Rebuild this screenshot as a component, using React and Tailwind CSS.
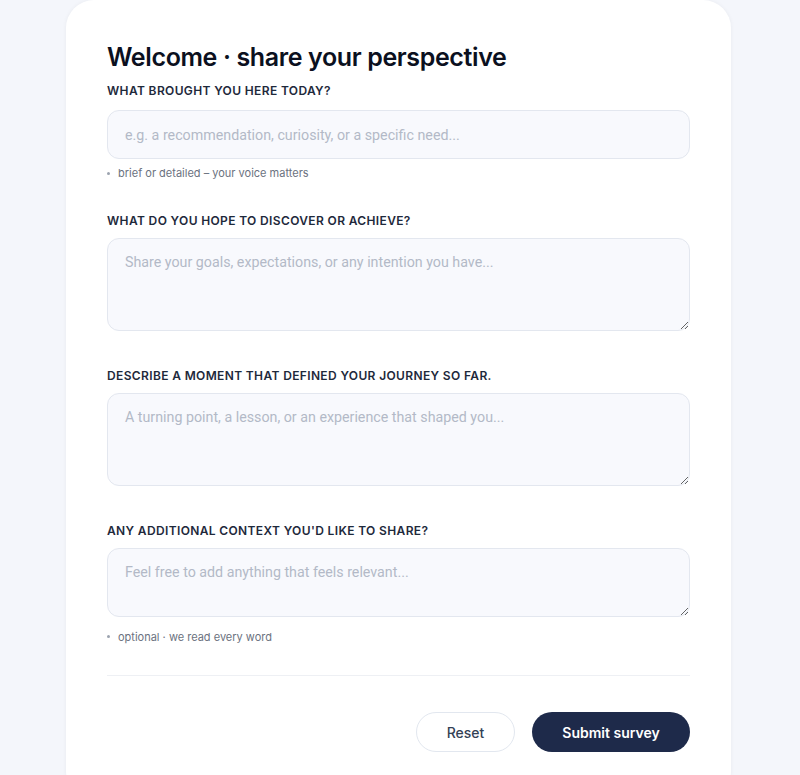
import { useState } from 'react'

const FIELDS = [
  {
    id: 'brought',
    label: 'What brought you here today?',
    placeholder: 'e.g. a recommendation, curiosity, or a specific need...',
    kind: 'input',
    hint: 'brief or detailed – your voice matters',
  },
  {
    id: 'hope',
    label: 'What do you hope to discover or achieve?',
    placeholder: 'Share your goals, expectations, or any intention you have...',
    kind: 'textarea',
    rows: 'h-[93px]',
  },
  {
    id: 'moment',
    label: 'Describe a moment that defined your journey so far.',
    placeholder: 'A turning point, a lesson, or an experience that shaped you...',
    kind: 'textarea',
    rows: 'h-[93px]',
  },
  {
    id: 'context',
    label: "Any additional context you'd like to share?",
    placeholder: 'Feel free to add anything that feels relevant...',
    kind: 'textarea',
    rows: 'h-[69px]',
    hint: 'optional · we read every word',
  },
]

// placeholder text renders narrower than the body face, Roboto gets closest
const fieldBase =
  'w-full rounded-xl border border-[#e3e7ef] bg-[#f8f9fd] px-[17px] font-[Roboto,sans-serif] text-[14.25px] text-slate-800 placeholder:text-[#b3b9c7] outline-none focus:border-[#1e2a4a]'

function Hint({ text, className }) {
  return (
    <p className={`flex items-center gap-[8px] text-[11px] text-[#6b7280] ${className}`}>
      <span className="inline-block h-[3px] w-[3px] rounded-full bg-[#9ca3af]" />
      {text}
    </p>
  )
}

export default function App() {
  const [values, setValues] = useState({})
  const update = (id) => (e) => setValues({ ...values, [id]: e.target.value })

  return (
    <div
      className="min-h-screen bg-[#f4f6fb] flex justify-center"
      style={{ fontFamily: 'Inter, "Noto Sans", sans-serif' }}
    >
      <div className="w-[665px] ml-[-3px] h-[800px] bg-white rounded-[28px] shadow-[0_0_4px_rgba(15,23,42,0.05)] px-[41px] pt-[40px]">
        <h1 className="text-[25px] leading-[34px] font-semibold tracking-[-0.015em] text-[#0b1020]">
          Welcome · share your perspective
        </h1>

        {FIELDS.map((f, i) => (
          <div key={f.id} className={i === 0 ? 'mt-[9px]' : i === 1 ? 'mt-[31px]' : 'mt-[37px]'}>
            <label
              htmlFor={f.id}
              className="block text-[12px] leading-4 font-semibold uppercase tracking-[0.03em] text-[#1e293b]"
            >
              {f.label}
            </label>
            {f.kind === 'input' ? (
              <input
                id={f.id}
                value={values[f.id] || ''}
                onChange={update(f.id)}
                placeholder={f.placeholder}
                className={`${fieldBase} mt-[11px] h-[49px] pt-[1px]`}
              />
            ) : (
              <textarea
                id={f.id}
                value={values[f.id] || ''}
                onChange={update(f.id)}
                placeholder={f.placeholder}
                className={`${fieldBase} mt-[9px] block resize-y py-[13px] leading-[20px] ${f.rows}`}
              />
            )}
            {f.hint && <Hint text={f.hint} className={i === 0 ? 'mt-[6px]' : 'mt-[12px]'} />}
          </div>
        ))}

        <div className="mt-[30px] border-t border-[#eef0f4]" />

        <div className="mt-[36px] flex justify-end gap-[17px]">
          <button
            type="button"
            onClick={() => setValues({})}
            className="h-[40px] w-[99px] rounded-full border border-[#e2e7ef] bg-white text-[14px] font-medium text-[#334155]"
          >
            Reset
          </button>
          <button
            type="button"
            className="h-[40px] w-[158px] rounded-full bg-[#1e2a4a] text-[14px] font-semibold text-white"
          >
            Submit survey
          </button>
        </div>
      </div>
    </div>
  )
}
